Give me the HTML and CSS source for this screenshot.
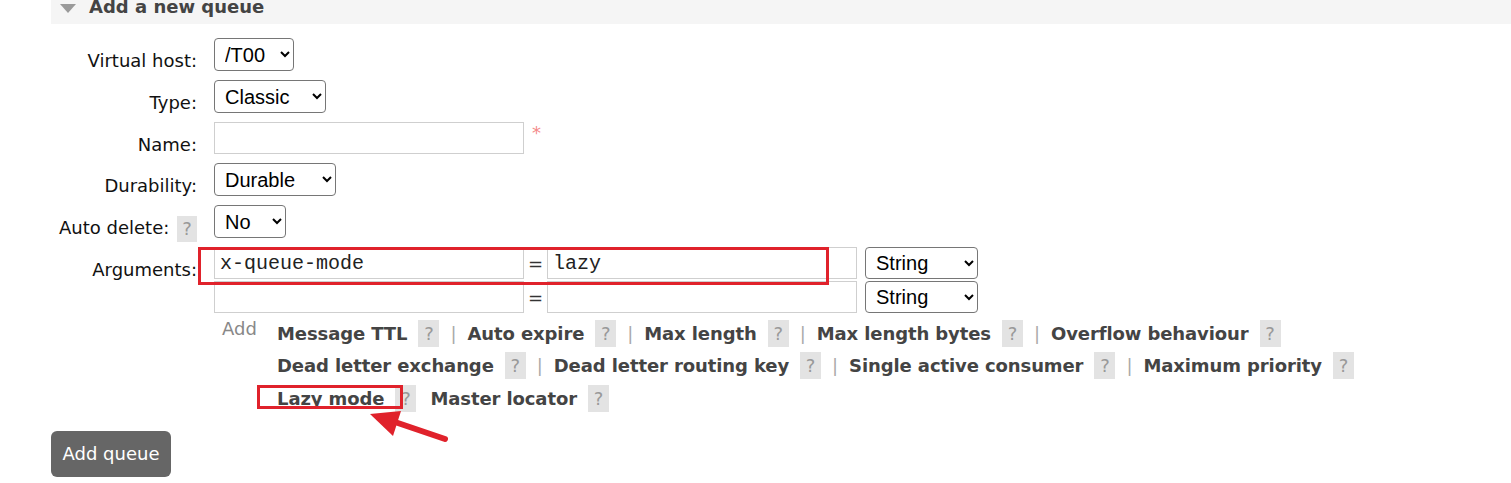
FILE: index.html
```html
<!DOCTYPE html>
<html>
<head>
<meta charset="utf-8">
<title>Add a new queue</title>
<link rel="stylesheet" href="styles.css">
</head>
<body>
<div class="page">
  <div class="section">
    <h2 class="section-head"><span class="tri"></span>Add a new queue</h2>
    <form class="queue-form">
      <table class="form">
        <tr>
          <th>Virtual host:</th>
          <td><select class="sel w-vhost"><option>/T00</option></select></td>
        </tr>
        <tr>
          <th>Type:</th>
          <td><select class="sel w-type"><option>Classic</option></select></td>
        </tr>
        <tr>
          <th>Name:</th>
          <td><input class="txt" type="text"><span class="req">*</span></td>
        </tr>
        <tr>
          <th>Durability:</th>
          <td><select class="sel w-dur"><option>Durable</option></select></td>
        </tr>
        <tr>
          <th>Auto delete: <span class="help help-label">?</span></th>
          <td><select class="sel w-no"><option>No</option></select></td>
        </tr>
        <tr>
          <th>Arguments:</th>
          <td>
            <div class="arg-row">
              <input class="txt" type="text" value="x-queue-mode"><span class="eq">=</span><input class="txt" type="text" value="lazy"><select class="sel w-str"><option>String</option></select>
            </div>
            <div class="arg-row">
              <input class="txt" type="text"><span class="eq">=</span><input class="txt" type="text"><select class="sel w-str"><option>String</option></select>
            </div>
            <div class="arg-links">
              <span class="add-label">Add</span>
              <div class="link-rows">
                <div class="link-row">
                  <span class="lk">Message TTL</span><span class="help">?</span><span class="sep">|</span>
                  <span class="lk">Auto expire</span><span class="help">?</span><span class="sep">|</span>
                  <span class="lk">Max length</span><span class="help">?</span><span class="sep">|</span>
                  <span class="lk">Max length bytes</span><span class="help">?</span><span class="sep">|</span>
                  <span class="lk">Overflow behaviour</span><span class="help">?</span>
                </div>
                <div class="link-row">
                  <span class="lk">Dead letter exchange</span><span class="help">?</span><span class="sep">|</span>
                  <span class="lk">Dead letter routing key</span><span class="help">?</span><span class="sep">|</span>
                  <span class="lk">Single active consumer</span><span class="help">?</span><span class="sep">|</span>
                  <span class="lk">Maximum priority</span><span class="help">?</span>
                </div>
                <div class="link-row">
                  <span class="lk">Lazy mode</span><span class="help">?</span>
                  <span class="lk gap">Master locator</span><span class="help">?</span>
                </div>
              </div>
            </div>
          </td>
        </tr>
      </table>
      <button type="button" class="btn">Add queue</button>
    </form>
  </div>

  <div class="mark mark-args"></div>
  <div class="mark mark-lazy"></div>
  <svg class="arrow" width="100" height="50" viewBox="360 400 100 50">
    <line x1="445" y1="439" x2="392" y2="421" stroke="#e0222b" stroke-width="6" stroke-linecap="round"/>
    <polygon points="370,414 401,411 393,436" fill="#e0222b"/>
  </svg>
</div>
</body>
</html>
```

FILE: styles.css
```css
html, body {
  margin: 0;
  padding: 0;
  background: #fff;
}

body {
  font-family: "DejaVu Sans", Verdana, sans-serif;
  font-size: 18px;
  color: #111;
}

.page {
  position: relative;
  width: 1511px;
  height: 483px;
  overflow: hidden;
}

.section {
  margin-left: 51px;
}

.section-head {
  display: flex;
  align-items: center;
  margin: -3px 0 0;
  padding: 0 0 7px 9px;
  background: #f5f5f5;
  font-size: 18px;
  line-height: 20px;
  font-weight: bold;
  color: #444;
}

.tri {
  width: 0;
  height: 0;
  border-left: 8px solid transparent;
  border-right: 8px solid transparent;
  border-top: 9px solid #9a9a9a;
  margin-right: 13px;
  margin-top: 2px;
}

.queue-form {
  margin: 0;
}

.form {
  border-collapse: separate;
  border-spacing: 0;
  margin-top: 10px;
}

.form th {
  width: 137px;
  padding: 16px 8px 4px 8px;
  text-align: right;
  font-weight: normal;
  vertical-align: top;
  white-space: nowrap;
  line-height: 21px;
  color: #111;
}

.form td {
  padding: 4px 9px 5px;
  vertical-align: top;
  line-height: 21px;
}

.sel {
  box-sizing: border-box;
  height: 33px;
  font-family: "Liberation Sans", Arial, sans-serif;
  font-size: 20px;
  color: #000;
  background: #fff;
  border: 1px solid #767676;
  border-radius: 4px;
  padding: 0 0 0 6px;
  vertical-align: top;
}

.w-vhost { width: 80px; }
.w-type { width: 112px; }
.w-dur { width: 122px; }
.w-no { width: 72px; }
.w-str { width: 113px; height: 32px; margin-left: 8px; }

.txt {
  box-sizing: border-box;
  width: 310px;
  height: 32px;
  border: 1px solid #cfcfcf;
  padding: 0 5px;
  font-family: "Liberation Mono", "Courier New", monospace;
  font-size: 20px;
  color: #222;
  vertical-align: top;
  background: #fff;
}

.req {
  color: #f48a8a;
  margin-left: 8px;
  vertical-align: top;
  font-size: 18px;
}

.help {
  display: inline-block;
  width: 21px;
  height: 27px;
  line-height: 27px;
  background: #e3e3e3;
  color: #999;
  font-weight: normal;
  text-align: center;
}

.help-label {
  width: 20px;
  height: 26px;
  line-height: 26px;
  margin: -3px 0 -3px 2px;
  vertical-align: middle;
}

.arg-row {
  display: flex;
  align-items: center;
}

.arg-row + .arg-row {
  margin-top: 2px;
}

.eq {
  width: 23px;
  text-align: center;
  color: #333;
}

.arg-links {
  display: flex;
  margin-top: 4px;
}

.add-label {
  box-sizing: border-box;
  width: 63px;
  padding-left: 8px;
  line-height: 24px;
  color: #888;
}

.link-rows {
  display: flex;
  flex-direction: column;
}

.link-row {
  display: flex;
  align-items: center;
  height: 32.5px;
  font-weight: bold;
  color: #444;
  white-space: nowrap;
  letter-spacing: -0.1px;
}

.lk {
  margin-right: 11px;
}

.gap {
  margin-left: 14px;
}

.sep {
  width: 28px;
  text-align: center;
  color: #aaa;
  font-weight: normal;
}

.btn {
  display: block;
  box-sizing: border-box;
  margin-top: 11px;
  width: 120px;
  height: 46px;
  padding: 0 8px;
  border: 0;
  border-radius: 6px;
  background: #666;
  color: #fff;
  font-family: "DejaVu Sans", Verdana, sans-serif;
  font-size: 18px;
  white-space: nowrap;
}

.mark {
  position: absolute;
  box-sizing: border-box;
  border: 3px solid #e0222b;
}

.mark-args {
  left: 198px;
  top: 247px;
  width: 631px;
  height: 38px;
}

.mark-lazy {
  left: 257px;
  top: 385px;
  width: 146px;
  height: 24px;
}

.arrow {
  position: absolute;
  left: 360px;
  top: 400px;
}
```
